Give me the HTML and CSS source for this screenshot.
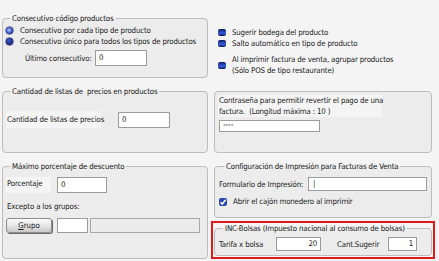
FILE: index.html
```html
<!DOCTYPE html>
<html lang="es">
<head>
    <meta charset="UTF-8">
    <title>Parámetros de productos</title>
    <link rel="stylesheet" href="styles.css">
</head>
<body>

<div class="page">

    <!-- fila 1 -->
    <fieldset class="group g-consec">
        <legend>Consecutivo código productos</legend>
        <div class="opt"><span class="radio on"></span>Consecutivo por cada tipo de producto</div>
        <div class="opt"><span class="radio"></span>Consecutivo único para todos los tipos de productos</div>
        <div class="row r-ultimo">
            <span class="lbl w-ultimo">Último consecutivo:</span>
            <span class="input i-ultimo">0</span>
        </div>
    </fieldset>

    <div class="checks">
        <div class="opt"><span class="check"></span>Sugerir bodega del producto</div>
        <div class="opt"><span class="check"></span>Salto automático en tipo de producto</div>
        <div class="opt two"><span class="check"></span><span>Al imprimir factura de venta, agrupar productos<br>(Sólo POS de tipo restaurante)</span></div>
    </div>

    <!-- fila 2 -->
    <fieldset class="group g-listas">
        <legend>Cantidad de listas de&nbsp; precios en productos</legend>
        <div class="row r-listas">
            <span class="lbl tag w-listas">Cantidad de listas de precios</span>
            <span class="input i-listas">0</span>
        </div>
    </fieldset>

    <div class="panel p-clave">
        <div class="tag clave-txt">Contraseña para permitir revertir el pago de una<br>factura.&nbsp; (Longitud máxima : 10 )</div>
        <span class="input i-clave">****</span>
    </div>

    <!-- fila 3 -->
    <fieldset class="group g-desc">
        <legend>Máximo porcentaje de descuento</legend>
        <div class="row r-porc">
            <span class="tag w-porc">Porcentaje</span>
            <span class="input i-porc">0</span>
        </div>
        <div class="excepto">Excepto a los grupos:</div>
        <div class="row r-grupo">
            <button class="btn"><u>G</u>rupo</button>
            <span class="input i-grupo"></span>
            <span class="input off i-nombre"></span>
        </div>
    </fieldset>

    <div class="col-right">
        <fieldset class="group g-impr">
            <legend>Configuración de Impresión para Facturas de Venta</legend>
            <div class="row r-form">
                <span class="lbl w-form">Formulario de Impresión:</span>
                <span class="input i-form">|</span>
            </div>
            <div class="opt"><span class="check on"><svg viewBox="0 0 8 8" width="8" height="8"><path d="M1.5 4.2 L3.3 6 L6.6 1.8" fill="none" stroke="#fff" stroke-width="1.5"/></svg></span>Abrir el cajón monedero al imprimir</div>
        </fieldset>

        <div class="mark">
            <fieldset class="group g-inc">
                <legend>INC-Bolsas (Impuesto nacional al consumo de bolsas)</legend>
                <div class="row r-inc">
                    <span class="lbl w-tarifa">Tarifa x bolsa</span>
                    <span class="input num i-tarifa">20</span>
                    <span class="lbl w-cant">Cant.Sugerir</span>
                    <span class="input num i-cant">1</span>
                </div>
            </fieldset>
        </div>
    </div>

</div>

</body>
</html>
```

FILE: styles.css
```css
:root {
    --page: #f4f4f4;
    --panel: #ececec;
    --line: #bdbdbd;
    --text: #1a1a1a;
    --navy: #0d1f72;
}

* { box-sizing: border-box; }

body {
    margin: 0;
    background: var(--page);
    color: var(--text);
    font-family: "DejaVu Sans Condensed", "Liberation Sans", sans-serif;
    font-stretch: condensed;
    font-size: 7.8px;
    letter-spacing: -0.15px;
    line-height: 11px;
}

.page {
    display: grid;
    grid-template-columns: 206px 218px;
    column-gap: 6px;
    row-gap: 8px;
    align-items: start;
    padding: 13px 0 0 2px;
}

/* Group boxes */
.group {
    margin: 0;
    min-width: 0;
    padding: 0 3px 4px;
    border: 1px solid var(--line);
    border-radius: 4px;
    background: var(--panel);
}

.group legend {
    padding: 0 2px;
    margin-left: 4px;
    line-height: 11px;
    white-space: nowrap;
}

.g-consec { height: 65px; }
.g-listas { height: 67px; }
.g-desc { height: 98px; }
.g-impr { height: 57px; }

.panel {
    border: 1px solid var(--line);
    border-radius: 4px;
    background: var(--panel);
}

.tag { background: #f4f4f4; }

/* Options */
.opt {
    display: flex;
    align-items: center;
    gap: 7px;
    line-height: 11px;
    white-space: nowrap;
}

.radio {
    width: 7px;
    height: 7px;
    border-radius: 50%;
    flex: none;
    background: radial-gradient(circle at 45% 40%, #3c58c4 0, var(--navy) 75%);
    box-shadow: 0 0 0 0.5px #08124a;
}
.radio.on { background: radial-gradient(circle at 45% 45%, #c9d6ff 0, #5a78e0 35%, var(--navy) 80%); }

.check {
    width: 8px;
    height: 7px;
    border-radius: 2px;
    flex: none;
    background: linear-gradient(#0a1860 0, #2c4fc4 45%, #3a5fd4 60%, #0a1860 100%);
}
.check.on {
    height: 8px;
    background: #2a47b8;
    display: flex;
    align-items: center;
    justify-content: center;
}

.g-consec .opt:first-of-type { margin-top: 1px; }

/* Rows, labels, inputs */
.row { display: flex; align-items: center; }

.lbl { white-space: nowrap; flex: none; }

.input {
    display: block;
    flex: none;
    background: #fff;
    border: 1px solid #9c9c9c;
    padding: 0 3px;
    line-height: 12px;
    white-space: nowrap;
    overflow: hidden;
}
.input.num { text-align: right; }
.input.off { background: #ebebeb; border-color: #a8a8a8; }

.r-ultimo { margin: 3px 0 0 19px; }
.w-ultimo { width: 70px; }
.i-ultimo { width: 52px; height: 16px; line-height: 14px; }

/* Checks column */
.checks { margin-top: 14px; padding-left: 4px; display: flex; flex-direction: column; }
.checks .opt { gap: 6px; }
.checks .two { margin-top: 5px; }

/* Listas */
.r-listas { margin-top: 14px; }
.w-listas { width: 95px; height: 17px; line-height: 17px; padding-left: 1px; }
.i-listas { width: 52px; height: 16px; line-height: 14px; margin-left: 17px; }

/* Clave */
.p-clave { margin-top: 5px; height: 62px; padding: 3px 0 0 3px; }
.clave-txt { width: 164px; padding-left: 1px; white-space: nowrap; }
.i-clave { width: 101px; height: 12px; margin: 3px 0 0 1px; font-size: 6px; line-height: 9px; color: #666; }

/* Descuento */
.r-porc { margin-top: 5px; align-items: flex-start; }
.w-porc { width: 45px; height: 16px; padding-left: 1px; padding-top: 1px; }
.i-porc { width: 50px; height: 16px; line-height: 14px; margin-left: 6px; }
.excepto { margin-top: 8px; padding-left: 1px; }

.r-grupo { margin-top: 6px; }
.btn {
    width: 46px;
    height: 15px;
    padding: 0;
    font: inherit;
    line-height: 12px;
    color: var(--text);
    border: 1px solid #8c8c8c;
    border-radius: 3px;
    background: linear-gradient(#fbfbfb 0, #e6e6e6 50%, #c9c9c9 100%);
    box-shadow: 1px 1px 0 #6a6a6a;
}
.i-grupo { width: 31px; height: 15px; margin-left: 5px; }
.i-nombre { width: 110px; height: 15px; margin-left: 2px; }

/* Impresión */
.col-right { display: flex; flex-direction: column; }
.g-impr legend { margin-left: 6px; }
.r-form { margin-top: 5px; padding-left: 1px; }
.w-form { width: 89px; }
.i-form { width: 119px; height: 14px; line-height: 12px; padding-left: 4px; }
.g-impr .opt { margin-top: 5px; padding-left: 1px; gap: 6px; }

/* INC-Bolsas */
.mark {
    margin: 3px -3px 0;
    border: 2px solid #e0191b;
    padding: 0 1px 1px;
}
.g-inc { padding-bottom: 4px; }
.g-inc legend { margin-left: 5px; }
.r-inc { margin-top: 3px; padding-left: 1px; }
.w-tarifa { width: 57px; }
.i-tarifa { width: 45px; height: 14px; }
.w-cant { margin-left: 16px; width: 51px; }
.i-cant { width: 29px; height: 14px; }
```
